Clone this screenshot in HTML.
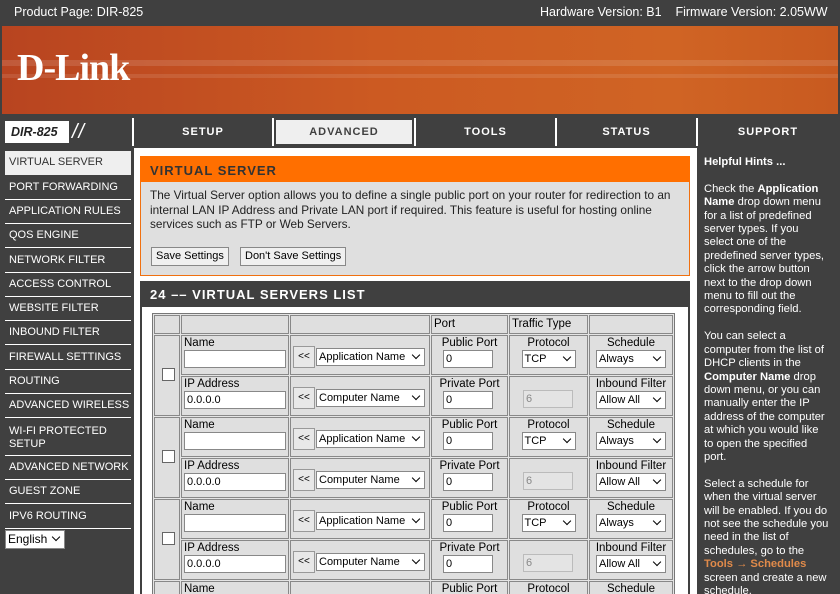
<!DOCTYPE html>
<html><head><meta charset="utf-8"><style>
*{box-sizing:border-box;margin:0;padding:0}
html,body{width:840px;height:594px;overflow:hidden}
body{background:#404040;font-family:"Liberation Sans","DejaVu Sans",sans-serif;font-size:12px;position:relative}
.a{position:absolute}
.top{left:2px;top:0;width:836px;height:24px;background:#404040;color:#fff;font-size:12.5px}
.ban{left:2px;top:26px;width:836px;height:88px;background:linear-gradient(90deg,#b84420 0%,#cc5a22 45%,#d06424 80%,#c85a20 100%)}
.nav{top:118px;height:28px;background:#404040;color:#fff;font-weight:bold;font-size:11px;letter-spacing:1px;text-align:center;line-height:28px}
.sep{position:absolute;top:118px;width:2px;height:28px;background:#fff}
.left{left:2px;top:148px;width:130px;height:446px;background:#404040}
.ni{position:absolute;left:5px;width:126px;color:#fff;font-size:11px;padding-left:4px;border-bottom:1px solid #fff;height:24px;line-height:22px;white-space:nowrap;overflow:hidden}
.main{left:134px;top:148px;width:563px;height:446px;background:#fff}
.right{left:699px;top:148px;width:139px;height:446px;overflow:hidden;background:#404040;color:#fff;font-size:11.2px;line-height:13.4px;padding:8px 9px 8px 5px}
.btn{position:absolute;background:#f0f0f0;border:1px solid #888;font-size:11px;padding:1px 4px;height:19px;line-height:15px;white-space:nowrap}
.clip{position:absolute;left:152px;top:313px;width:530px;height:281px;overflow:hidden}
table{position:absolute;left:0;top:0;border-collapse:separate;border-spacing:1px;background:#e4e4e4;border:1px solid #777;table-layout:fixed;width:522px}
td{border:1px solid #888;background:#dfdfdf;font-size:11.5px;line-height:14px;vertical-align:top;padding:0 2px;position:relative;height:40px;overflow:hidden;white-space:nowrap}
.inp{display:block;background:#fff;border:1px solid #888;height:18px;font-size:11px;padding-left:2px;line-height:16px}
.sel{display:inline-block;background:#fff;border:1px solid #888;height:18px;font-size:11px;padding-left:2px;line-height:16px;position:relative;vertical-align:middle;text-align:left}
.sel:after{content:"";position:absolute;right:5px;top:3px;width:5px;height:5px;border-right:1.5px solid #000;border-bottom:1.5px solid #000;transform:rotate(45deg)}
.cb{position:absolute;left:7px;top:32px;width:13px;height:13px;background:#fff;border:1px solid #666}
.c{text-align:center}
.mid{padding-top:10px}
.bb{display:inline-block;width:22px;height:22px;background:#e8e8e8;border:1px solid #999;font-size:10px;line-height:20px;text-align:center;vertical-align:middle;margin-right:1px}
</style></head><body>
<div class="a top"><span class="a" style="left:12px;top:5px">Product Page: DIR-825</span><span class="a" style="left:538px;top:5px;white-space:nowrap">Hardware Version: B1 &nbsp;&nbsp; Firmware Version: 2.05WW</span></div>
<div class="a ban"><div class="a" style="left:0;top:34px;width:836px;height:6px;background:rgba(255,255,255,.12)"></div><div class="a" style="left:0;top:48px;width:836px;height:4px;background:rgba(255,255,255,.1)"></div>
<span class="a" style="left:15px;top:20px;font-family:'Liberation Serif',serif;font-weight:bold;font-size:38px;color:#fff;letter-spacing:-1px">D-Link</span></div>
<div class="a nav" style="left:2px;width:130px;text-align:left"><div class="a" style="left:3px;top:3px;width:64px;height:22px;background:#fff;color:#222;font-style:italic;letter-spacing:0;font-size:12.5px;line-height:22px;padding-left:6px">DIR-825</div><span class="a" style="left:70px;top:0;color:#fff;font-size:20px;font-weight:normal;font-style:italic">//</span></div>
<div class="sep" style="left:132px"></div><div class="sep" style="left:272px"></div><div class="sep" style="left:414px"></div><div class="sep" style="left:555px"></div><div class="sep" style="left:696px"></div>
<div class="a nav" style="left:134px;width:138px">SETUP</div>
<div class="a nav" style="left:274px;width:140px"><div class="a" style="left:2px;top:2px;width:136px;height:24px;background:#efefef;color:#404040;line-height:24px">ADVANCED</div></div>
<div class="a nav" style="left:416px;width:139px">TOOLS</div>
<div class="a nav" style="left:557px;width:139px">STATUS</div>
<div class="a nav" style="left:698px;width:140px">SUPPORT</div>
<div class="a left"></div>
<div class="ni" style="top:151px;background:#efefef;color:#333;border-bottom:none">VIRTUAL SERVER</div>
<div class="ni" style="top:176px">PORT FORWARDING</div>
<div class="ni" style="top:200px">APPLICATION RULES</div>
<div class="ni" style="top:224px">QOS ENGINE</div>
<div class="ni" style="top:249px">NETWORK FILTER</div>
<div class="ni" style="top:273px">ACCESS CONTROL</div>
<div class="ni" style="top:297px">WEBSITE FILTER</div>
<div class="ni" style="top:321px">INBOUND FILTER</div>
<div class="ni" style="top:346px">FIREWALL SETTINGS</div>
<div class="ni" style="top:370px">ROUTING</div>
<div class="ni" style="top:394px">ADVANCED WIRELESS</div>
<div class="ni" style="top:419px;height:37px;line-height:13px;padding-top:6px;white-space:normal">WI-FI PROTECTED<br>SETUP</div>
<div class="ni" style="top:456px">ADVANCED NETWORK</div>
<div class="ni" style="top:480px">GUEST ZONE</div>
<div class="ni" style="top:505px">IPV6 ROUTING</div>
<div class="a sel" style="left:5px;top:530px;width:60px;height:19px;font-size:12px;color:#000">English</div>
<div class="a main">
<div class="a" style="left:6px;top:8px;width:550px;height:120px;background:#dfdfdf;border:1px solid #f07010"></div>
<div class="a" style="left:6px;top:8px;width:550px;height:26px;background:#ff6f00;color:#333;font-weight:bold;font-size:13px;letter-spacing:1px;padding:7px 0 0 10px">VIRTUAL SERVER</div>
<div class="a" style="left:16px;top:40px;width:536px;font-size:11.8px;line-height:14.5px;color:#222">The Virtual Server option allows you to define a single public port on your router for redirection to an internal LAN IP Address and Private LAN port if required. This feature is useful for hosting online services such as FTP or Web Servers.</div>
<div class="btn" style="left:17px;top:99px">Save Settings</div>
<div class="btn" style="left:106px;top:99px">Don't Save Settings</div>
<div class="a" style="left:6px;top:133px;width:550px;height:313px;border:2px solid #404040;border-bottom:none;background:#fff"></div>
<div class="a" style="left:6px;top:133px;width:550px;height:26px;background:#404040;color:#fff;font-weight:bold;font-size:13px;letter-spacing:1px;padding:6px 0 0 10px">24 –– VIRTUAL SERVERS LIST</div>
</div>
<div class="clip"><table>
<colgroup><col style="width:26px"><col style="width:108px"><col style="width:140px"><col style="width:77px"><col style="width:79px"><col style="width:84px"></colgroup>
<tr><td style="height:19px"></td><td style="height:19px"></td><td style="height:19px"></td><td style="height:19px;line-height:17px">Port</td><td style="height:19px;line-height:17px">Traffic Type</td><td style="height:19px"></td></tr>
<tr><td rowspan="2"><div class="cb"></div></td><td>Name<span class="inp" style="width:102px"></span></td><td class="mid"><span class="bb">&lt;&lt;</span><span class="sel" style="width:109px">Application Name</span></td><td class="c">Public Port<span class="inp" style="width:50px;margin-left:9px;text-align:left">0</span></td><td class="c">Protocol<br><span class="sel" style="width:54px">TCP</span></td><td class="c">Schedule<br><span class="sel" style="width:70px">Always</span></td></tr>
<tr><td>IP Address<span class="inp" style="width:102px">0.0.0.0</span></td><td class="mid"><span class="bb">&lt;&lt;</span><span class="sel" style="width:109px">Computer Name</span></td><td class="c">Private Port<span class="inp" style="width:50px;margin-left:9px;text-align:left">0</span></td><td class="c"><span class="inp" style="width:50px;margin:13px 0 0 11px;background:#e4e4e4;border-color:#bbb;color:#888;text-align:left">6</span></td><td class="c">Inbound Filter<br><span class="sel" style="width:70px">Allow All</span></td></tr>
<tr><td rowspan="2"><div class="cb"></div></td><td>Name<span class="inp" style="width:102px"></span></td><td class="mid"><span class="bb">&lt;&lt;</span><span class="sel" style="width:109px">Application Name</span></td><td class="c">Public Port<span class="inp" style="width:50px;margin-left:9px;text-align:left">0</span></td><td class="c">Protocol<br><span class="sel" style="width:54px">TCP</span></td><td class="c">Schedule<br><span class="sel" style="width:70px">Always</span></td></tr>
<tr><td>IP Address<span class="inp" style="width:102px">0.0.0.0</span></td><td class="mid"><span class="bb">&lt;&lt;</span><span class="sel" style="width:109px">Computer Name</span></td><td class="c">Private Port<span class="inp" style="width:50px;margin-left:9px;text-align:left">0</span></td><td class="c"><span class="inp" style="width:50px;margin:13px 0 0 11px;background:#e4e4e4;border-color:#bbb;color:#888;text-align:left">6</span></td><td class="c">Inbound Filter<br><span class="sel" style="width:70px">Allow All</span></td></tr>
<tr><td rowspan="2"><div class="cb"></div></td><td>Name<span class="inp" style="width:102px"></span></td><td class="mid"><span class="bb">&lt;&lt;</span><span class="sel" style="width:109px">Application Name</span></td><td class="c">Public Port<span class="inp" style="width:50px;margin-left:9px;text-align:left">0</span></td><td class="c">Protocol<br><span class="sel" style="width:54px">TCP</span></td><td class="c">Schedule<br><span class="sel" style="width:70px">Always</span></td></tr>
<tr><td>IP Address<span class="inp" style="width:102px">0.0.0.0</span></td><td class="mid"><span class="bb">&lt;&lt;</span><span class="sel" style="width:109px">Computer Name</span></td><td class="c">Private Port<span class="inp" style="width:50px;margin-left:9px;text-align:left">0</span></td><td class="c"><span class="inp" style="width:50px;margin:13px 0 0 11px;background:#e4e4e4;border-color:#bbb;color:#888;text-align:left">6</span></td><td class="c">Inbound Filter<br><span class="sel" style="width:70px">Allow All</span></td></tr>
<tr><td rowspan="2"><div class="cb"></div></td><td>Name<span class="inp" style="width:102px"></span></td><td></td><td class="c">Public Port</td><td class="c">Protocol</td><td class="c">Schedule</td></tr>
</table></div>
<div class="a right"><b>Helpful Hints ...</b><br><br>Check the <b>Application Name</b> drop down menu for a list of predefined server types. If you select one of the predefined server types, click the arrow button next to the drop down menu to fill out the corresponding field.<br><br>You can select a computer from the list of DHCP clients in the <b>Computer Name</b> drop down menu, or you can manually enter the IP address of the computer at which you would like to open the specified port.<br><br>Select a schedule for when the virtual server will be enabled. If you do not see the schedule you need in the list of schedules, go to the <b style="color:#e08a4a">Tools → Schedules</b> screen and create a new schedule.</div>
</body></html>
